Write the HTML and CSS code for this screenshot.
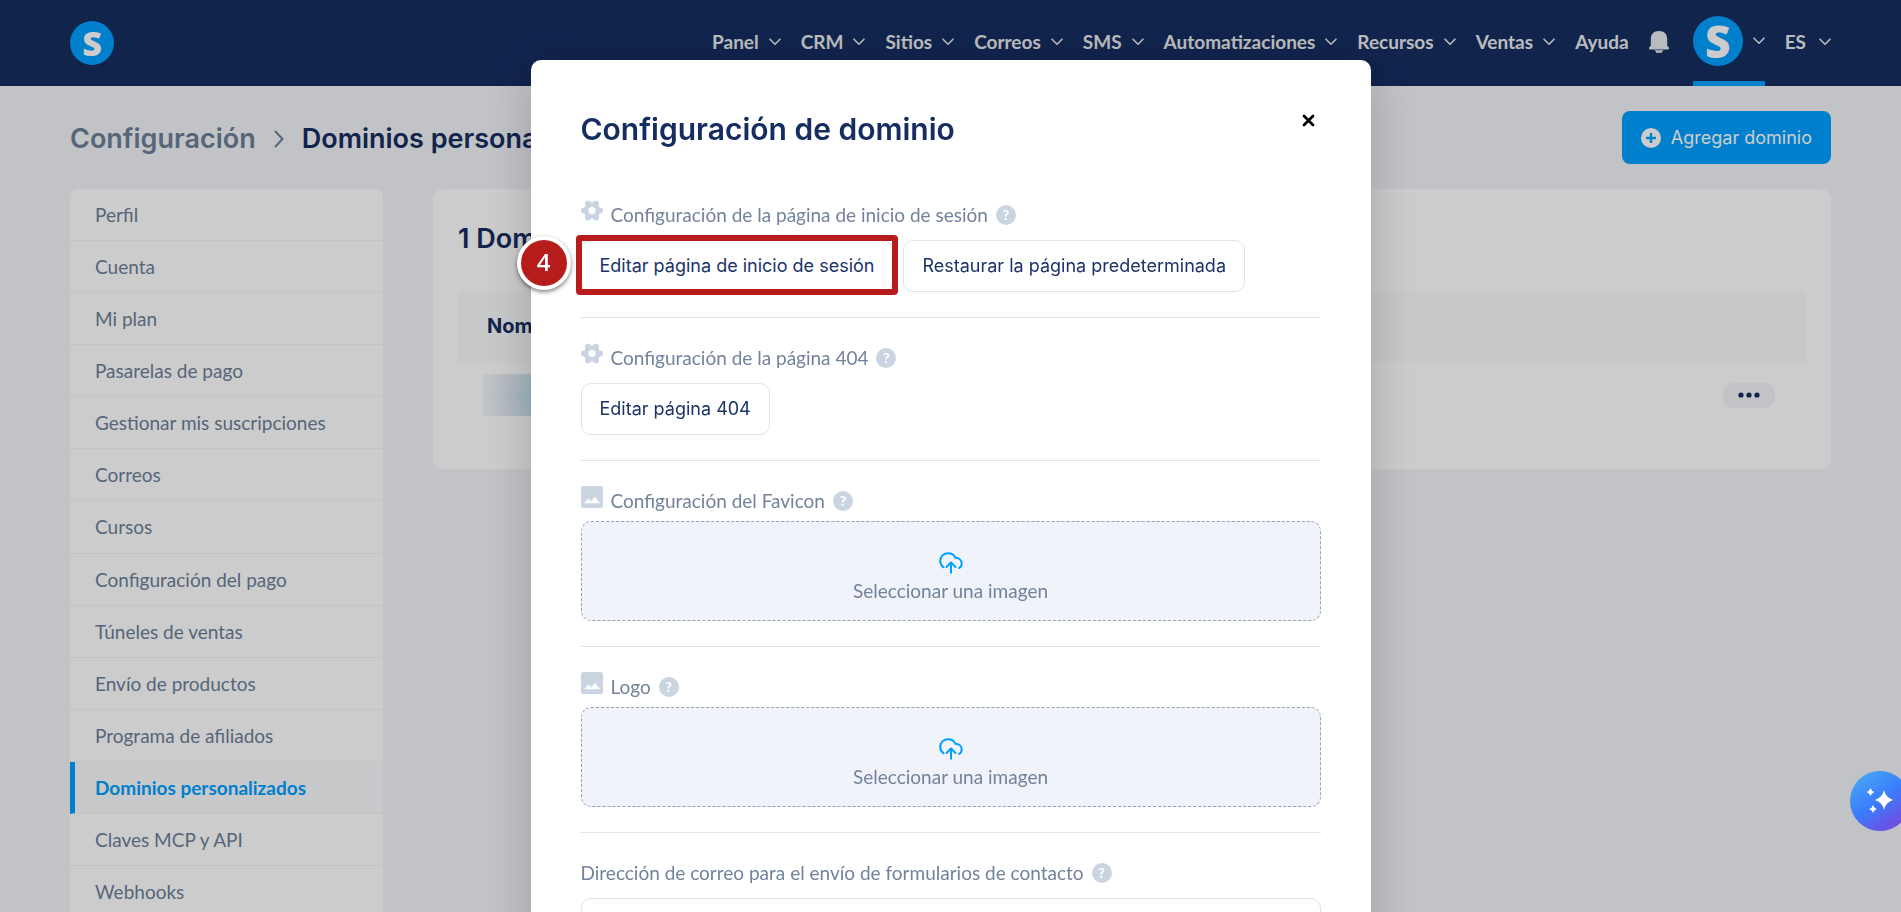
FILE: index.html
```
<!DOCTYPE html>
<html lang="es">
<head>
  <meta charset="UTF-8">
  <meta name="viewport" content="width=device-width, initial-scale=1">
  <title>Dominios personalizados</title>
  <link rel="stylesheet" href="styles.css">
</head>
<body>

  <!-- Icons -->
  <svg class="sprite" width="0" height="0" aria-hidden="true">
    <symbol id="chevron" viewBox="0 0 12 8">
      <path d="M1 1.2l5 5 5-5" fill="none" stroke="currentColor" stroke-width="1.6" stroke-linecap="round" stroke-linejoin="round"/>
    </symbol>
    <symbol id="gear" viewBox="0 0 22 22">
      <g fill="none" stroke="currentColor">
        <circle cx="11" cy="10.500" r="6" stroke-width="4.600"/>
        <path stroke-width="6" stroke-linecap="round" d="M17.800 10.500h1.200M4.200 10.500H3M14.400 16.400l.6 1M7.600 16.400l-.6 1M14.400 4.600l.6-1M7.600 4.600l-.6-1"/>
      </g>
    </symbol>
    <symbol id="image" viewBox="0 0 22 22">
      <path fill-rule="evenodd" fill="currentColor" d="M2.500 0h17A2.500 2.500 0 0 1 22 2.500v17a2.500 2.500 0 0 1-2.500 2.500h-17A2.500 2.500 0 0 1 0 19.500v-17A2.500 2.500 0 0 1 2.500 0zM3 17.300h16l-5-6.300-4 4.600-2.600-3.200z"/>
    </symbol>
    <symbol id="upload" viewBox="0 0 24 22">
      <path d="M4.600 15.300C2.400 13.800 1.200 11.500 1.200 9c0-4.600 3.400-7.800 8-7.800 3.300 0 6 1.700 7.300 4.600 3.600.2 6.200 2.500 6.200 5.600 0 1.900-.8 3.500-2.600 4.600M12 20.800V11M7.500 15l4.500-4.500 4.500 4.500" fill="none" stroke="currentColor" stroke-width="2" stroke-linecap="round" stroke-linejoin="round"/>
    </symbol>
  </svg>

  <header class="navbar">
    <a href="#" class="logo">S</a>
    <nav class="menu">
      <a href="#">Panel <svg class="chevron"><use href="#chevron"/></svg></a>
      <a href="#">CRM <svg class="chevron"><use href="#chevron"/></svg></a>
      <a href="#">Sitios <svg class="chevron"><use href="#chevron"/></svg></a>
      <a href="#">Correos <svg class="chevron"><use href="#chevron"/></svg></a>
      <a href="#">SMS <svg class="chevron"><use href="#chevron"/></svg></a>
      <a href="#">Automatizaciones <svg class="chevron"><use href="#chevron"/></svg></a>
      <a href="#">Recursos <svg class="chevron"><use href="#chevron"/></svg></a>
      <a href="#">Ventas <svg class="chevron"><use href="#chevron"/></svg></a>
      <a href="#">Ayuda</a>
      <button class="bell" aria-label="Notificaciones">
        <svg width="20" height="22" viewBox="0 0 20 22">
          <path d="M10 0C4.500 0 1.800 3.500 1.800 8V14.500L.2 16.500Q-.4 18.500 1.200 18.500h17.600Q20.400 18.500 19.800 16.500L18.200 14.500V8C18.200 3.500 15.500 0 10 0zM5.800 19.300h8.400v1h-1.200V21.800H7v-1.500H5.800z" fill="currentColor"/>
        </svg>
      </button>
      <a href="#" class="account"><span class="avatar">S</span> <svg class="chevron"><use href="#chevron"/></svg></a>
      <a href="#" class="lang">ES <svg class="chevron"><use href="#chevron"/></svg></a>
    </nav>
  </header>

  <main class="container">
    <div class="page-head">
      <div class="breadcrumb">
        <a href="#">Configuración</a>
        <svg width="12" height="20" viewBox="0 0 12 20"><path d="M2 2l7.500 8L2 18" fill="none" stroke="currentColor" stroke-width="2"/></svg>
        <h1>Dominios personalizados</h1>
      </div>
      <button class="btn-add">
        <svg width="20" height="20" viewBox="0 0 20 20"><circle cx="10" cy="10" r="10" fill="#fff"/><path d="M10 5v10M5 10h10" stroke="#00a0ff" stroke-width="2.400"/></svg>
        Agregar dominio
      </button>
    </div>

    <div class="columns">
      <nav class="sidebar">
        <a href="#">Perfil</a>
        <a href="#">Cuenta</a>
        <a href="#">Mi plan</a>
        <a href="#">Pasarelas de pago</a>
        <a href="#">Gestionar mis suscripciones</a>
        <a href="#">Correos</a>
        <a href="#">Cursos</a>
        <a href="#">Configuración del pago</a>
        <a href="#">Túneles de ventas</a>
        <a href="#">Envío de productos</a>
        <a href="#">Programa de afiliados</a>
        <a href="#" class="active">Dominios personalizados</a>
        <a href="#">Claves MCP y API</a>
        <a href="#">Webhooks</a>
      </nav>

      <section class="card">
        <h2>1 Dominio</h2>
        <table class="domains">
          <thead>
            <tr><th>Nombre</th><th></th></tr>
          </thead>
          <tbody>
            <tr>
              <td><div class="hidden-name"></div></td>
              <td class="actions">
                <button class="btn-more" aria-label="Acciones">
                  <svg width="22" height="6" viewBox="0 0 22 6" fill="currentColor"><circle cx="3" cy="3" r="2.600"/><circle cx="11" cy="3" r="2.600"/><circle cx="19" cy="3" r="2.600"/></svg>
                </button>
              </td>
            </tr>
          </tbody>
        </table>
      </section>
    </div>
  </main>

  <div class="overlay">
    <div class="modal" role="dialog" aria-labelledby="modalTitle">
      <div class="modal-head">
        <h2 id="modalTitle">Configuración de dominio</h2>
        <button class="btn-close" aria-label="Cerrar">
          <svg width="13" height="13" viewBox="0 0 13 13"><path d="M2 2l9 9M11 2l-9 9" stroke="#000" stroke-width="2.800" stroke-linecap="round"/></svg>
        </button>
      </div>

      <div class="group">
        <div class="group-label">
          <svg class="icon"><use href="#gear"/></svg>
          <span>Configuración de la página de inicio de sesión</span>
          <button class="help" aria-label="Ayuda">?</button>
        </div>
        <div class="buttons">
          <div class="step">
            <button class="btn">Editar página de inicio de sesión</button>
            <span class="step-frame"></span>
            <span class="step-number">4</span>
          </div>
          <button class="btn">Restaurar la página predeterminada</button>
        </div>
      </div>

      <div class="group">
        <div class="group-label">
          <svg class="icon"><use href="#gear"/></svg>
          <span>Configuración de la página 404</span>
          <button class="help" aria-label="Ayuda">?</button>
        </div>
        <div class="buttons">
          <button class="btn">Editar página 404</button>
        </div>
      </div>

      <div class="group">
        <div class="group-label">
          <svg class="icon"><use href="#image"/></svg>
          <span>Configuración del Favicon</span>
          <button class="help" aria-label="Ayuda">?</button>
        </div>
        <button class="dropzone">
          <svg width="24" height="22"><use href="#upload"/></svg>
          Seleccionar una imagen
        </button>
      </div>

      <div class="group">
        <div class="group-label">
          <svg class="icon"><use href="#image"/></svg>
          <span>Logo</span>
          <button class="help" aria-label="Ayuda">?</button>
        </div>
        <button class="dropzone">
          <svg width="24" height="22"><use href="#upload"/></svg>
          Seleccionar una imagen
        </button>
      </div>

      <div class="group">
        <div class="group-label">
          <label for="contactEmail">Dirección de correo para el envío de formularios de contacto</label>
          <button class="help" aria-label="Ayuda">?</button>
        </div>
        <input type="email" id="contactEmail" class="field">
      </div>
    </div>
  </div>

  <button class="assistant" aria-label="Asistente">
    <svg width="28" height="26" viewBox="0 0 28 26" fill="#fff">
      <path d="M18 2q1.500 7.500 9 10-7.500 2.500-9 10-1.500-7.500-9-10 7.500-2.500 9-10z"/>
      <path d="M4.500 0q.8 3.200 4 4-3.200.8-4 4-.8-3.200-4-4 3.200-.8 4-4z"/>
      <path d="M7 17q.8 3.200 4 4-3.200.8-4 4-.8-3.200-4-4 3.200-.8 4-4z"/>
    </svg>
  </button>

</body>
</html>
```
FILE: styles.css
```
* {
  box-sizing: border-box;
}
body {
  margin: 0;
  height: 100vh;
  overflow: hidden;
  font-family: Lato, 'Liberation Sans', sans-serif;
  font-size: 19px;
  line-height: 1.32;
  color: #152d60;
  background: #f2f4f9;
}
a {
  color: inherit;
  text-decoration: none;
}
button {
  font: inherit;
  color: inherit;
  border: none;
  background: none;
  padding: 0;
  cursor: pointer;
}
svg {
  display: block;
  flex: none;
}
h1, h2 {
  margin: 0;
  font-family: Inter, sans-serif;
  font-weight: 600;
}
.sprite {
  position: absolute;
}

/* Navbar */
.navbar {
  display: flex;
  align-items: center;
  justify-content: space-between;
  height: 86px;
  padding: 0 70px;
  background: #152d60;
  color: #e8ebee;
}
.logo, .avatar {
  display: flex;
  align-items: center;
  justify-content: center;
  width: 44px;
  height: 44px;
  border-radius: 50%;
  background: #00a0ff;
  color: #fff;
  font-family: 'Open Sans', sans-serif;
  font-size: 34px;
  font-weight: 800;
  line-height: 1;
}
.avatar {
  width: 50px;
  height: 50px;
  font-size: 44px;
}
.menu {
  display: flex;
  align-self: stretch;
  gap: 20px;
  font-weight: 700;
}
.menu a, .bell {
  display: flex;
  align-items: center;
  gap: 10px;
  height: 83px;
}
.chevron {
  width: 12px;
  height: 8px;
}
.menu .account {
  height: 86px;
  margin-left: 4px;
  border-top: 1px solid transparent;
  border-bottom: 5px solid #00a0ff;
}
.menu .lang {
  gap: 13px;
}

/* Page */
.container {
  padding: 25px 70px 0;
}
.page-head {
  display: flex;
  align-items: center;
  justify-content: space-between;
  margin-bottom: 25px;
}
.breadcrumb {
  display: flex;
  align-items: center;
  gap: 17px;
  padding-top: 2px;
  font-family: Inter, sans-serif;
  font-size: 27px;
  font-weight: 600;
  color: #6c7f99;
}
.breadcrumb h1 {
  font-size: 27px;
  color: #152d60;
}
.btn-add {
  display: flex;
  align-items: center;
  gap: 10px;
  height: 53px;
  padding: 0 19px;
  border-radius: 8px;
  background: #00a0ff;
  color: #fff;
  font-family: Inter, sans-serif;
  font-size: 18px;
}
.columns {
  display: flex;
  align-items: flex-start;
  gap: 50px;
}
.sidebar {
  width: 313px;
  border-radius: 8px;
  overflow: hidden;
  background: #fff;
  color: #6c7f99;
}
.sidebar a {
  display: block;
  padding: 13px 25px;
  border-bottom: 1px solid #f2f4f9;
}
.sidebar .active {
  padding-left: 20px;
  border-left: 5px solid #00a0ff;
  background: #f8fafc;
  color: #00a0ff;
  font-weight: 700;
}
.card {
  flex: 1;
  min-height: 280px;
  padding: 25px;
  border-radius: 10px;
  background: #fff;
}
.card h2 {
  margin-bottom: 27px;
  font-size: 27px;
  line-height: 50px;
}
.domains {
  width: 100%;
  border-collapse: collapse;
}
.domains th {
  height: 71px;
  padding: 0 29px;
  background: #f8fafc;
  text-align: left;
  font-family: Inter, sans-serif;
  font-size: 20px;
  font-weight: 700;
}
.domains th:first-child {
  border-top-left-radius: 10px;
}
.domains th:last-child {
  border-top-right-radius: 10px;
}
.domains td {
  height: 66px;
  padding: 0 25px;
}
.hidden-name {
  width: 160px;
  height: 42px;
  background: radial-gradient(circle at 60px 24px, #b8dff0, #dfe8f0 36px, #f4f6fa 60px);
}
.domains .actions {
  width: 120px;
  padding: 0 31px;
}
.btn-more {
  display: flex;
  align-items: center;
  justify-content: center;
  width: 52px;
  height: 25px;
  margin-left: auto;
  border-radius: 10px;
  background: #f2f4f9;
}

/* Modal */
.overlay {
  position: fixed;
  inset: 0;
  display: flex;
  justify-content: center;
  align-items: flex-start;
  padding-top: 60px;
  overflow: hidden;
  background: rgba(0, 0, 0, 0.2);
}
.modal {
  width: 840px;
  max-width: 100%;
  padding: 50px;
  border-radius: 10px;
  background: #fff;
  box-shadow: 0 10px 50px rgba(0, 0, 0, 0.2);
}
.modal-head {
  display: flex;
  justify-content: space-between;
  align-items: flex-start;
  margin-bottom: 27px;
}
.modal-head h2 {
  font-size: 30px;
  line-height: 38px;
}
.btn-close {
  padding: 4px 6px;
}
.group {
  padding: 24px 0 25px;
  border-bottom: 1px solid #e0e4e7;
}
.group-label {
  display: flex;
  align-items: center;
  gap: 8px;
  height: 32px;
  margin-bottom: 4px;
  color: #72839b;
}
.icon {
  align-self: flex-start;
  width: 22px;
  height: 22px;
  margin-top: 1px;
  color: #cbd5e2;
}
.help {
  width: 20px;
  height: 20px;
  border-radius: 50%;
  background: #cbd5e2;
  color: #fff;
  font-size: 14px;
  font-weight: 900;
  line-height: 20px;
}
.buttons {
  display: flex;
  gap: 10px;
  padding-top: 5px;
}
.btn {
  height: 52px;
  padding: 0 18px;
  border: 1px solid #dfe4e7;
  border-radius: 10px;
  background: #fff;
  font-family: Inter, sans-serif;
  font-size: 18px;
  color: #1c3268;
}
.step {
  position: relative;
}
.step-frame {
  position: absolute;
  inset: -5px -5px -3px;
  border: 6px solid #b71c1c;
  border-radius: 4px;
}
.step-number {
  position: absolute;
  top: -4px;
  left: -64px;
  width: 54px;
  height: 54px;
  border: 4px solid #fff;
  border-radius: 50%;
  background: #b71c1c;
  box-shadow: 0 2px 4px rgba(0, 0, 0, 0.5);
  color: #fff;
  font-family: 'Open Sans', sans-serif;
  font-size: 24px;
  font-weight: 600;
  line-height: 44px;
  text-align: center;
}
.dropzone {
  display: flex;
  flex-direction: column;
  align-items: center;
  justify-content: center;
  gap: 4px;
  width: 100%;
  height: 100px;
  padding-top: 14px;
  border: 1px dashed #93a5b5;
  border-radius: 10px;
  background: #f0f3f9;
  color: #72839b;
}
.dropzone svg {
  color: #00a0ff;
}
.field {
  width: 100%;
  height: 52px;
  margin-top: 5px;
  padding: 0 20px;
  border: 1px solid #dfe4e7;
  border-radius: 10px;
  font: inherit;
}

/* Floating assistant, half out of the window */
.assistant {
  position: fixed;
  right: -9px;
  bottom: 81px;
  display: flex;
  align-items: center;
  justify-content: center;
  width: 60px;
  height: 60px;
  border-radius: 50%;
  background: linear-gradient(145deg, #46a5f5 10%, #3b7bfb 50%, #8040d8 95%);
}
```
